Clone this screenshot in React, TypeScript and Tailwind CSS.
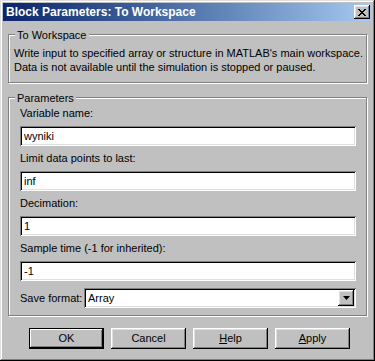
import React from "react";

const sunken =
  "bg-white shadow-[inset_1px_1px_0_#808080,inset_-1px_-1px_0_#fff,inset_2px_2px_0_#000,inset_-2px_-2px_0_#dfdfdf]";
const raised =
  "bg-[#c0c0c0] shadow-[inset_-1px_-1px_0_#000,inset_1px_1px_0_#fff,inset_-2px_-2px_0_#808080,inset_2px_2px_0_#dfdfdf]";

function Field({ label, value }: { label: string; value: string }) {
  return (
    <div className="flex flex-col">
      <div className="h-[25px] flex items-center pl-[11px]">{label}</div>
      <div className={`${sunken} h-[20px] ml-[11px] mr-[10px] flex items-center pl-[4px]`}>
        {value}
      </div>
    </div>
  );
}

function Btn({ children, def }: { children: React.ReactNode; def?: boolean }) {
  return (
    <div
      className={`w-[75px] h-[21px] flex items-center justify-center ${
        def
          ? "bg-[#c0c0c0] shadow-[inset_0_0_0_1px_#000,inset_-2px_-2px_0_#000,inset_2px_2px_0_#fff,inset_-3px_-3px_0_#808080]"
          : raised
      }`}
    >
      {children}
    </div>
  );
}

export default function App() {
  return (
    <div
      className="w-[375px] h-[361px] bg-[#c0c0c0] p-[3px] flex flex-col text-[11px] text-black shadow-[inset_-1px_-1px_0_#000,inset_1px_1px_0_#dfdfdf,inset_-2px_-2px_0_#808080,inset_2px_2px_0_#fff]"
      style={{ fontFamily: '"Liberation Sans", Arial, sans-serif' }}
    >
      {/* Title bar */}
      <div className="h-[18px] flex items-center justify-between pl-[3px] pr-[2px] bg-gradient-to-r from-[#0a246a] to-[#a6caf0]">
        <span className="text-white font-bold text-[12px] leading-none">
          Block Parameters: To Workspace
        </span>
        <div className={`${raised} w-[16px] h-[14px] flex items-center justify-center`}>
          <svg width="8" height="7" viewBox="0 0 8 7">
            <path
              d="M0 0h2v1h1v1h2v-1h1v-1h2v1h-1v1h-1v1h-1v1h1v1h1v1h1v1h-2v-1h-1v-1h-2v1h-1v1h-2v-1h1v-1h1v-1h1v-1h-1v-1h-1v-1h-1z"
              fill="#000"
            />
          </svg>
        </div>
      </div>

      {/* Group 1 */}
      <div className="mt-[13px] mx-[5px] relative border border-[#808080] shadow-[inset_1px_1px_0_#fff,1px_1px_0_#fff] h-[49px] pl-[5px] pt-[11px] leading-[14px]">
        <span className="absolute left-[6px] -top-[7px] bg-[#c0c0c0] px-[2px] leading-[14px]">
          To Workspace
        </span>
        <div>Write input to specified array or structure in MATLAB's main workspace.</div>
        <div>Data is not available until the simulation is stopped or paused.</div>
      </div>

      {/* Group 2 */}
      <div className="mt-[14px] mx-[5px] relative border border-[#808080] shadow-[inset_1px_1px_0_#fff,1px_1px_0_#fff] h-[219px] pt-[3px]">
        <span className="absolute left-[6px] -top-[7px] bg-[#c0c0c0] px-[2px] leading-[14px]">
          Parameters
        </span>
        <Field label="Variable name:" value="wyniki" />
        <Field label="Limit data points to last:" value="inf" />
        <Field label="Decimation:" value="1" />
        <Field label="Sample time (-1 for inherited):" value="-1" />
        <div className="flex items-center mt-[7px] pl-[11px] pr-[10px]">
          <span className="w-[64px]">Save format:</span>
          <div className={`${sunken} flex-1 h-[20px] flex items-center justify-between pl-[4px] pr-[2px]`}>
            <span>Array</span>
            <div className={`${raised} w-[16px] h-[16px] flex items-center justify-center`}>
              <svg width="7" height="4" viewBox="0 0 7 4">
                <path d="M0 0h7L3.5 4z" fill="#000" />
              </svg>
            </div>
          </div>
        </div>
      </div>

      {/* Buttons */}
      <div className="flex gap-[7px] pl-[26px] mt-[12px]">
        <Btn def>OK</Btn>
        <Btn>Cancel</Btn>
        <Btn>
          <span>
            <span className="underline">H</span>elp
          </span>
        </Btn>
        <Btn>
          <span>
            <span className="underline">A</span>pply
          </span>
        </Btn>
      </div>
    </div>
  );
}
